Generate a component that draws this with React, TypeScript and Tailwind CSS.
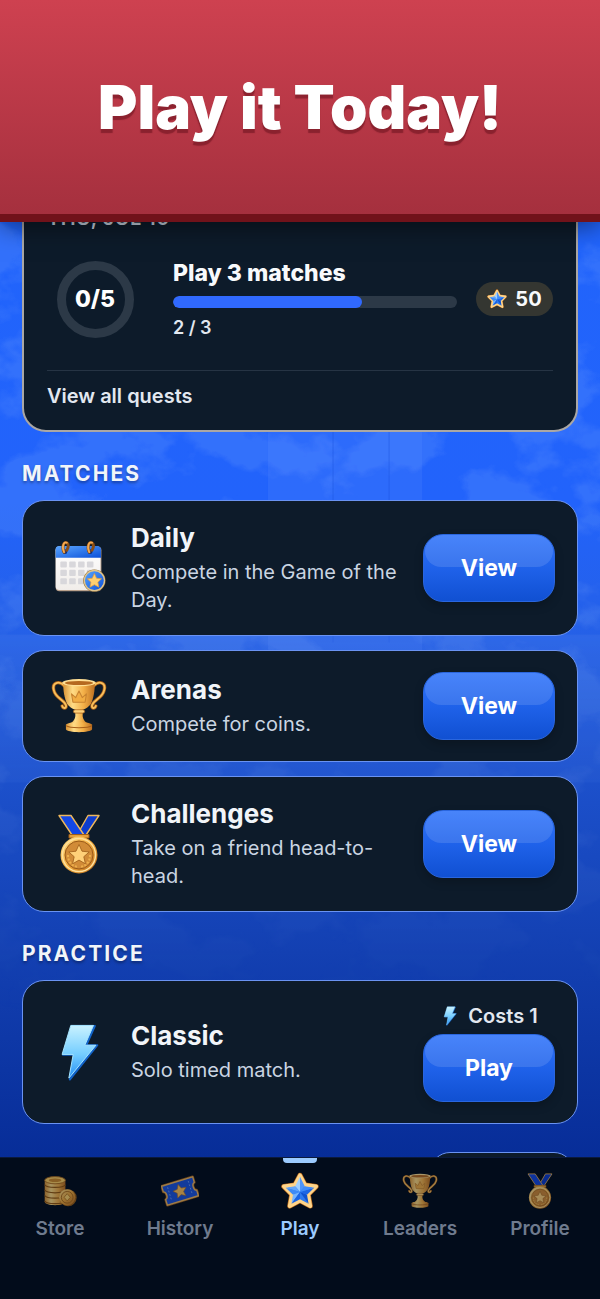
import type { ReactNode } from "react";

type IconProps = { className?: string };

function Gradients() {
  return (
    <svg className="absolute w-0 h-0" aria-hidden="true">
      <defs>
        <linearGradient id="gold" x1="0" y1="0" x2="1" y2="1">
          <stop offset="0" stopColor="#ffdf8a" />
          <stop offset="0.5" stopColor="#f0a93c" />
          <stop offset="1" stopColor="#b8691b" />
        </linearGradient>
        <linearGradient id="goldAcross" x1="0" y1="0" x2="1" y2="0">
          <stop offset="0" stopColor="#d99335" />
          <stop offset="0.3" stopColor="#ffdc86" />
          <stop offset="0.65" stopColor="#f3af47" />
          <stop offset="1" stopColor="#bd6f20" />
        </linearGradient>
        <linearGradient id="sky" x1="0" y1="0" x2="1" y2="1">
          <stop offset="0" stopColor="#5aa6ff" />
          <stop offset="1" stopColor="#0b4fd8" />
        </linearGradient>
        <linearGradient id="bolt" x1="0" y1="0" x2="0" y2="1">
          <stop offset="0" stopColor="#c9f2ff" />
          <stop offset="0.55" stopColor="#74cdff" />
          <stop offset="1" stopColor="#2590f5" />
        </linearGradient>
        <linearGradient id="paper" x1="0" y1="0" x2="0" y2="1">
          <stop offset="0" stopColor="#ffffff" />
          <stop offset="1" stopColor="#f1edea" />
        </linearGradient>
      </defs>
    </svg>
  );
}

function StarIcon({ className }: IconProps) {
  return (
    <svg className={className} viewBox="0 0 40 40" aria-hidden="true">
      <path
        d="M20 3.500 25.300 13.600 37 15.200 28.600 23.700 30.800 35.800 20 30 9.200 35.800 11.400 23.700 3 15.200 14.700 13.600Z"
        fill="#1c6cf0" stroke="#b8691b" strokeWidth="5.400" strokeLinejoin="round"
      />
      <path
        d="M20 3.500 25.300 13.600 37 15.200 28.600 23.700 30.800 35.800 20 30 9.200 35.800 11.400 23.700 3 15.200 14.700 13.600Z"
        fill="#2b7bf3" stroke="#ffd58a" strokeWidth="4" strokeLinejoin="round"
      />
      <path d="M20 5V21L14.900 15Z" fill="#9fd0ff" />
      <path d="M20 5V21L25 15Z" fill="#4f95f8" />
      <path d="M5 16.500 14.900 15 20 21Z" fill="#62a6fb" />
      <path d="M5 16.500 20 21 12.600 24Z" fill="#3e8bf6" />
      <path d="M11 33.500 12.600 24 20 21Z" fill="#78b5fd" />
      <path d="M11 33.500 20 21V28.600Z" fill="#1863e4" />
      <path d="M29 33.500 20 21V28.600Z" fill="#2d79ee" />
      <path d="M29 33.500 27.400 24 20 21Z" fill="#1053cf" />
      <path d="M35 16.500 20 21 27.400 24Z" fill="#1d66e4" />
      <path d="M35 16.500 25 15 20 21Z" fill="#3f8cf8" />
    </svg>
  );
}

function TrophyIcon({ className }: IconProps) {
  return (
    <svg className={className} viewBox="0 0 60 60" aria-hidden="true">
      <g fill="none" strokeLinecap="round">
        <path d="M15 9C8 2 1 5 3 13C5 22 13 22 16 29C17 33 13 33 12 30M45 9C52 2 59 5 57 13C55 22 47 22 44 29C43 33 47 33 48 30" stroke="#a85f19" strokeWidth="3.600" />
        <path d="M15 9C8 2 1 5 3 13C5 22 13 22 16 29C17 33 13 33 12 30M45 9C52 2 59 5 57 13C55 22 47 22 44 29C43 33 47 33 48 30" stroke="#f9c05c" strokeWidth="2" />
      </g>
      <path d="M13 4H47C47 14 45.500 22 43 27C40 32 35 34.500 30 34.500C25 34.500 20 32 17 27C14.500 22 13 14 13 4Z" fill="url(#goldAcross)" />
      <ellipse cx="30" cy="5" rx="18" ry="3.800" fill="#ffdf94" />
      <ellipse cx="30" cy="5.400" rx="15" ry="2.200" fill="#b5691f" />
      <path d="M23.500 26 22 17 26.500 21 30 14 33.500 21 38 17 36.500 26Z" fill="#f2ad43" stroke="#c98430" strokeWidth="1.200" strokeLinejoin="round" />
      <path d="M26.500 33.500H33.500L34 38C33.500 43 35 46 40 49H20C25 46 26.500 43 26 38Z" fill="url(#goldAcross)" />
      <rect x="24" y="34" width="12" height="3.600" rx="1.800" fill="#ffd27a" stroke="#a85f19" strokeWidth="0.800" />
      <path d="M16 50C17 46.500 43 46.500 44 50V55C43 59 17 59 16 55Z" fill="url(#goldAcross)" />
      <path d="M16 51C20 54 40 54 44 51" fill="none" stroke="#a85f19" strokeWidth="1.200" />
    </svg>
  );
}

function MedalIcon({ className }: IconProps) {
  return (
    <svg className={className} viewBox="0 0 60 60" aria-hidden="true">
      <path d="M39 1.500H50L37 21H28Z" fill="#0c3ccf" stroke="#edb75c" strokeWidth="1.400" strokeLinejoin="round" />
      <path d="M10 1.500H22L35 21H23Z" fill="#1448e6" stroke="#edb75c" strokeWidth="1.400" strokeLinejoin="round" />
      <path d="M20 20.500H40V24H20Z" fill="#e6a03b" stroke="#9d5c18" strokeWidth="1" />
      <circle cx="30" cy="41" r="18.500" fill="url(#gold)" />
      <circle cx="30" cy="41" r="16.500" fill="none" stroke="#ffe09a" strokeWidth="1.500" />
      <circle cx="30" cy="41" r="14" fill="#d18b37" stroke="#9a5a18" strokeWidth="1" />
      <path d="M19 41C19 48 23 52 29 53M41 41C41 48 37 52 31 53" fill="none" stroke="#eeb04c" strokeWidth="2" strokeDasharray="2 1.500" />
      <path d="M30 30.500 33 37.200 40.200 38 34.800 42.700 36.400 49.800 30 46.100 23.600 49.800 25.200 42.700 19.800 38 27 37.200Z" fill="#ffd078" stroke="#9d5c18" strokeWidth="0.800" strokeLinejoin="round" />
    </svg>
  );
}

function CalendarIcon({ className }: IconProps) {
  const rows = [23, 32, 41];
  const cols = [10, 19.5, 29, 38.5];

  return (
    <svg className={className} viewBox="0 0 60 60" aria-hidden="true">
      <rect x="5" y="7" width="49" height="48" rx="4" fill="#b9a18c" />
      <rect x="5" y="7" width="48" height="46.500" rx="4" fill="url(#paper)" />
      <path d="M5 19V10C5 8 6 6.500 9 6.500H49C52 6.500 53.500 8 53.500 10V19Z" fill="url(#sky)" />
      {rows.map((y) =>
        cols.map((x) => <rect key={`${x}-${y}`} x={x} y={y} width="7" height="6.500" rx="1" fill="#d8d7db" />)
      )}
      {[14, 41].map((x) => (
        <g key={x} fill="none" strokeLinecap="round">
          <circle cx={x + 1} cy="12.500" r="2.500" fill="#0b2f80" />
          <path d={`M${x} 13C${x - 3} 7 ${x} 1 ${x + 3} 3C${x + 5} 4 ${x + 5} 8 ${x + 3} 11`} stroke="#8b4d14" strokeWidth="3.200" />
          <path d={`M${x} 13C${x - 3} 7 ${x} 1 ${x + 3} 3`} stroke="#f5ab52" strokeWidth="2" />
        </g>
      ))}
      <circle cx="46.500" cy="43.500" r="12" fill="#8c6a34" />
      <circle cx="46.500" cy="43.500" r="10.800" fill="url(#sky)" stroke="#dfc58f" strokeWidth="1.400" />
      <path d="M46.500 36 48.800 41 54.100 41.600 50.200 45.200 51.300 50.500 46.500 47.900 41.700 50.500 42.800 45.200 38.900 41.600 44.200 41Z" fill="#ffcf70" stroke="#e09c41" strokeWidth="0.800" strokeLinejoin="round" />
    </svg>
  );
}

function BoltIcon({ className }: IconProps) {
  return (
    <svg className={className} viewBox="0 0 60 60" aria-hidden="true">
      <path d="M23 3H46.500L37.500 23H49L20.500 58.500L25 33H13.500Z" fill="#1263c8" stroke="#1263c8" strokeWidth="2" strokeLinejoin="round" />
      <path d="M21.500 2.500H45L36 23H47.500L19.500 57L24 32.500H12.500Z" fill="url(#bolt)" stroke="#a8e6ff" strokeWidth="1" strokeLinejoin="round" />
    </svg>
  );
}

function CoinsIcon({ className }: IconProps) {
  return (
    <svg className={className} viewBox="0 0 40 40" aria-hidden="true">
      <path d="M3 8V32C3 37 26 37 26 32V8Z" fill="url(#goldAcross)" />
      {[13, 19, 25, 31].map((y) => (
        <path key={y} d={`M3 ${y}C5 ${y + 4} 24 ${y + 4} 26 ${y}`} fill="none" stroke="#94570f" strokeWidth="1.300" />
      ))}
      <ellipse cx="14.500" cy="8" rx="11.500" ry="4" fill="#ffcf63" stroke="#a8681a" />
      <ellipse cx="14.500" cy="8" rx="7" ry="2" fill="#d08c2b" />
      <circle cx="29" cy="27.500" r="9.500" fill="#9b5f15" />
      <circle cx="28" cy="27" r="9" fill="url(#gold)" />
      <circle cx="28" cy="27" r="6.500" fill="none" stroke="#a8681a" />
      <path d="M28 23 31.500 27 28 31 24.500 27Z" fill="#ffd36c" stroke="#a8681a" strokeWidth="0.800" />
    </svg>
  );
}

function TicketIcon({ className }: IconProps) {
  return (
    <svg className={className} viewBox="0 0 40 40" aria-hidden="true">
      <g transform="rotate(-17 20 20)" strokeLinejoin="round">
        <path d="M2 9H38V15.500C34.500 16 34.500 24 38 24.500V31H2V24.500C5.500 24 5.500 16 2 15.500Z" fill="#1d55e0" stroke="#9a5b18" strokeWidth="3" />
        <path d="M2 9H38V15.500C34.500 16 34.500 24 38 24.500V31H2V24.500C5.500 24 5.500 16 2 15.500Z" fill="#1d55e0" stroke="#f2b95e" strokeWidth="1.500" />
        <path d="M8 12V28M32 12V28" stroke="#6f9bf5" strokeDasharray="2 2" />
        <path d="M20 12.500 22.300 17.300 27.500 18 23.700 21.600 24.700 26.800 20 24.200 15.300 26.800 16.300 21.600 12.500 18 17.700 17.300Z" fill="#ffc35b" stroke="#b06d1f" strokeWidth="0.600" />
      </g>
    </svg>
  );
}

// Faint park scene that shows through between the cards
function Backdrop() {
  return (
    <svg className="absolute inset-0 w-full h-full" viewBox="0 0 600 934" preserveAspectRatio="xMidYMid slice" aria-hidden="true">
      <defs>
        <linearGradient id="night" x1="0" y1="0" x2="0" y2="1">
          <stop offset="0" stopColor="#2164fb" />
          <stop offset="0.3" stopColor="#2263fb" />
          <stop offset="0.45" stopColor="#2560e6" />
          <stop offset="0.6" stopColor="#1c50cb" />
          <stop offset="0.78" stopColor="#1340b2" />
          <stop offset="1" stopColor="#072d98" />
        </linearGradient>
        <linearGradient id="fade" x1="0" y1="0" x2="0" y2="1">
          <stop offset="0" stopColor="#fff" />
          <stop offset="0.4" stopColor="#fff" />
          <stop offset="0.85" stopColor="#000" />
        </linearGradient>
        <mask id="fadeOut">
          <rect width="600" height="934" fill="url(#fade)" />
        </mask>
        <filter id="foliage" x="0" y="0" width="100%" height="100%">
          <feTurbulence type="fractalNoise" baseFrequency="0.012 0.016" numOctaves="5" seed="21" />
          <feColorMatrix values="0 0 0 0 0.45  0 0 0 0 0.64  0 0 0 0 1  8 0 0 0 -3.700" />
        </filter>
      </defs>
      <rect width="600" height="934" fill="url(#night)" />
      <g mask="url(#fadeOut)">
        <rect width="600" height="934" filter="url(#foliage)" opacity="0.12" />
        <path d="M268 0H422V500H268Z" fill="#6f9dff" opacity="0.14" />
        <path d="M333 180V420M389 180V420" stroke="#1d55df" opacity="0.5" />
        <path d="M0 412H600V560H0Z" fill="#6c92ea" opacity="0.14" />
      </g>
    </svg>
  );
}

function SectionTitle({ children }: { children: ReactNode }) {
  return (
    <h2 className="mt-7 mb-3 text-[21px] leading-7 font-bold uppercase tracking-widest text-slate-100 [text-shadow:0_2px_3px_rgba(0,0,0,0.35)]">
      {children}
    </h2>
  );
}

function GlossyButton({ children }: { children: ReactNode }) {
  return (
    <button
      type="button"
      className="relative w-[132px] h-[68px] rounded-[20px] overflow-hidden bg-linear-to-b from-[#2f73fa] via-[#1f62ea] to-[#1050d2] border border-[#2a66de] shadow-[0_4px_10px_rgba(0,0,0,0.2)] text-[23px] font-bold text-white"
    >
      <span className="absolute inset-x-px top-0 h-8 rounded-[18px] bg-white/12" />
      <span className="relative">{children}</span>
    </button>
  );
}

interface ModeCardProps {
  icon: ReactNode;
  title: string;
  description: string;
  action: string;
  cost?: string;
}

function ModeCard({ icon, title, description, action, cost }: ModeCardProps) {
  return (
    <article className="flex items-center rounded-[22px] border border-[#6a93f2] bg-[#0d1b2a] py-[21px] pl-6 pr-[22px]">
      <div className="w-16 mr-5 flex shrink-0 justify-center">{icon}</div>
      <div className="flex-1 min-w-0">
        <h3 className="mb-1 text-[26px] leading-8 font-bold text-slate-100">{title}</h3>
        <p className="text-xl leading-7 text-slate-300">{description}</p>
      </div>
      <div className="ml-5 flex shrink-0 flex-col items-center gap-1">
        {cost && (
          <div className="flex items-center gap-2 text-xl leading-7 font-semibold text-slate-200">
            <BoltIcon className="w-5 h-5" />
            {cost}
          </div>
        )}
        <GlossyButton>{action}</GlossyButton>
      </div>
    </article>
  );
}

function QuestCard() {
  return (
    <section className="-mt-11 rounded-b-[24px] border-2 border-[#aaa7a4] bg-[#0d1b2a] px-[23px] pt-6 pb-5">
      <p className="text-xl leading-7 font-semibold uppercase tracking-wide text-slate-300">Thu, Jul 10</p>
      <div className="mt-[25px] mb-[29px] flex items-center">
        <div className="relative w-24 mr-[30px] flex shrink-0 items-center justify-center">
          <svg className="w-[77px] h-[77px]" viewBox="0 0 77 77" fill="none" aria-hidden="true">
            <circle cx="38.500" cy="38.500" r="34" stroke="#2c3947" strokeWidth="9" />
          </svg>
          <span className="absolute text-[23px] font-extrabold text-white">0/5</span>
        </div>
        <div className="flex-1">
          <h3 className="text-[23px] leading-8 font-extrabold text-slate-50">Play 3 matches</h3>
          <div className="my-[7px] h-3 rounded-full bg-[#2c3947] overflow-hidden">
            <div className="h-full w-2/3 rounded-full bg-[#3069fe]" />
          </div>
          <p className="text-lg leading-[26px] font-semibold text-slate-200">2 / 3</p>
        </div>
        <div className="ml-[19px] flex h-[34px] w-[77px] items-center justify-center gap-2 rounded-full bg-[#343631] text-xl font-bold text-slate-50">
          <StarIcon className="w-5 h-5" />
          50
        </div>
      </div>
      <div className="border-t border-[#263444] pt-[11px]">
        <a href="#quests" className="block text-xl leading-7 font-semibold text-slate-200">View all quests</a>
      </div>
    </section>
  );
}

const TABS = [
  { label: "Store", icon: <CoinsIcon className="w-9 h-9" /> },
  { label: "History", icon: <TicketIcon className="w-[38px] h-9" /> },
  { label: "Play", icon: <StarIcon className="w-[38px] h-[38px]" />, active: true },
  { label: "Leaders", icon: <TrophyIcon className="w-9 h-9" /> },
  { label: "Profile", icon: <MedalIcon className="w-9 h-9" /> },
];

function TabBar() {
  return (
    <nav className="relative z-10 grid grid-cols-5 border-t border-[#0b1a3c] bg-[#020c1b] pb-[58px]">
      {TABS.map((tab) => (
        <a
          key={tab.label}
          href={`#${tab.label.toLowerCase()}`}
          aria-current={tab.active ? "page" : undefined}
          className={`flex flex-col items-center text-[19px] leading-6 font-semibold ${tab.active ? "text-[#9ccbff]" : "text-[#6f7b8e]"}`}
        >
          <span className={`h-[5px] w-[34px] rounded-b-sm ${tab.active ? "bg-[#9ccbff]" : ""}`} />
          <span className={`mt-[9px] mb-[7px] flex h-[38px] items-center ${tab.active ? "" : "opacity-65"}`}>{tab.icon}</span>
          {tab.label}
        </a>
      ))}
    </nav>
  );
}

export default function App() {
  return (
    <div className="flex h-screen flex-col overflow-hidden bg-[#072d98] font-['Inter',sans-serif]">
      <Gradients />
      <header className="relative z-10 flex h-[222px] shrink-0 items-center justify-center border-b-8 border-[#71121a] bg-linear-to-b from-[#ce4150] to-[#a5303e] shadow-[0_4px_24px_rgba(0,0,0,0.5)]">
        <h1 className="text-[60px] leading-none font-black text-white [text-shadow:0_4px_1px_rgba(110,20,32,0.6)]">Play it Today!</h1>
      </header>

      <main className="relative min-h-0 flex-1 overflow-hidden">
        <Backdrop />
        <div className="relative flex flex-col px-[22px]">
          <QuestCard />

          <SectionTitle>Matches</SectionTitle>
          <div className="flex flex-col gap-[14px]">
            <ModeCard icon={<CalendarIcon className="w-14 h-14" />} title="Daily" description="Compete in the Game of the Day." action="View" />
            <ModeCard icon={<TrophyIcon className="w-14 h-14" />} title="Arenas" description="Compete for coins." action="View" />
            <ModeCard icon={<MedalIcon className="w-[60px] h-[60px]" />} title="Challenges" description="Take on a friend head-to-head." action="View" />
          </div>

          <SectionTitle>Practice</SectionTitle>
          <ModeCard icon={<BoltIcon className="w-[58px] h-[58px]" />} title="Classic" description="Solo timed match." action="Play" cost="Costs 1" />

          <div className="mt-7 mr-1 h-10 w-[144px] self-end rounded-[20px] border border-[#6a93f2] bg-[#0d1b2a]" />
        </div>
      </main>

      <TabBar />
    </div>
  );
}
